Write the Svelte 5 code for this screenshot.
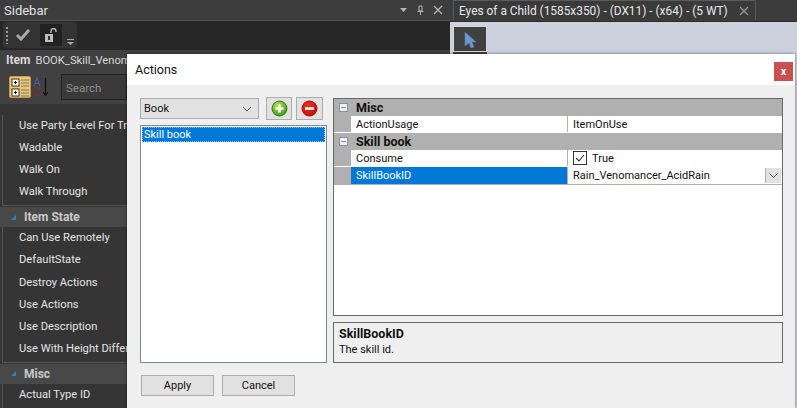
<script>
  const groups = [
    { title: '', rows: ['Use Party Level For Treasure', 'Wadable', 'Walk On', 'Walk Through'] },
    { title: 'Item State', rows: ['Can Use Remotely', 'DefaultState', 'Destroy Actions', 'Use Actions', 'Use Description', 'Use With Height Difference'] },
    { title: 'Misc', rows: ['Actual Type ID'] }
  ]
</script>

<div class="desktop">
  <aside class="sidebar">
    <div class="titlebar">
      <span class="title">Sidebar</span>
      <span class="title-icons">
        <svg width="9" height="9" viewBox="0 0 9 9"><path d="M1 2h7L4.500 6z" fill="#b5b5b5" /></svg>
        <svg width="9" height="11" viewBox="0 0 9 11"><path d="M3 1h3v5H3zM1.500 6.500h6M4.500 7v3" fill="none" stroke="#b5b5b5" /></svg>
        <svg width="10" height="10" viewBox="0 0 10 10"><path d="M1 1l8 8M9 1l-8 8" stroke="#b5b5b5" stroke-width="1.300" /></svg>
      </span>
    </div>
    <div class="toolstrip">
      <div class="tools">
        <span class="grip"></span>
        <svg class="check" width="16" height="14" viewBox="0 0 16 14"><path d="M2 7l4 4 8-9" fill="none" stroke="#a8a8a8" stroke-width="3" /></svg>
        <span class="lock">
          <svg width="14" height="15" viewBox="0 0 14 15"><path d="M1 6h8v8H1z" fill="#bdbdbd" /><path d="M4 8h2v4H4z" fill="#333" /><path d="M7 5V3a2 2 0 0 1 5 0v1" fill="none" stroke="#bdbdbd" stroke-width="1.300" /></svg>
        </span>
        <svg class="more" width="7" height="6" viewBox="0 0 7 6"><path d="M0 0h7v1H0zM0 3h7L3.500 6z" fill="#a8a8a8" /></svg>
      </div>
    </div>
    <div class="panel">
      <div class="item-row"><b>Item</b><span class="item-name">BOOK_Skill_Venomancer_AcidRain</span></div>
      <div class="search-row">
        <span class="cat-btn">
          <svg width="19" height="19" viewBox="0 0 19 19">
            <rect x="1" y="1" width="7" height="7" fill="#fff" stroke="#333" />
            <rect x="1" y="11" width="7" height="7" fill="#fff" stroke="#333" />
            <path d="M3 4.500h3M4.500 3v3M3 14.500h3M4.500 13v3" stroke="#111" />
            <path d="M10 2h8M10 5h8M10 8h8M10 12h8M10 15h8M10 18h8" stroke="#6a7a90" />
          </svg>
        </span>
        <svg class="az" width="17" height="20" viewBox="0 0 17 20">
          <path d="M12.500 1v17M10 15l2.500 3.500L15 15" fill="none" stroke="#111" stroke-width="1.200" />
          <path d="M1 9l3-8 3 8M2 6.500h4" fill="none" stroke="#3b5fa8" stroke-width="1.200" />
          <path d="M1.500 11h5l-5 7h5" fill="none" stroke="#8c2a2a" stroke-width="1.200" />
        </svg>
        <span class="search">Search</span>
      </div>
      <div class="grid-rows">
        {#each groups as group}
          {#if group.title}
            <div class="group-head"><i class="tri"></i><b>{group.title}</b></div>
          {/if}
          <div class="group-body">
            {#each group.rows as row}
              <div class="row">{row}</div>
            {/each}
          </div>
        {/each}
      </div>
    </div>
  </aside>

  <section class="document">
    <div class="tabstrip">
      <div class="tab">
        <span>Eyes of a Child (1585x350) - (DX11) - (x64) - (5 WT)</span>
        <svg width="10" height="10" viewBox="0 0 10 10"><path d="M1 1l8 8M9 1l-8 8" stroke="#999" stroke-width="1.200" /></svg>
      </div>
    </div>
    <div class="canvas">
      <span class="cursor-btn">
        <svg width="13" height="17" viewBox="0 0 13 17"><path d="M1 1l11 10H8l2 5-3 1-2-5-4 3z" fill="#6f97c9" stroke="#557ba8" stroke-width=".6" /></svg>
      </span>
    </div>
  </section>

  <div class="dialog">
    <header class="dialog-head">
      <span>Actions</span>
      <button class="close">x</button>
    </header>
    <div class="dialog-body">
      <div class="left">
        <div class="picker">
          <div class="select">
            <span>Book</span>
            <svg width="10" height="6" viewBox="0 0 10 6"><path d="M1 1l4 4 4-4" fill="none" stroke="#555" /></svg>
          </div>
          <span class="round-btn">
            <svg width="17" height="17" viewBox="0 0 17 17">
              <defs>
                <radialGradient id="green" cx=".4" cy=".3" r=".8"><stop offset="0" stop-color="#b6e24a" /><stop offset="1" stop-color="#2f9414" /></radialGradient>
                <radialGradient id="red" cx=".4" cy=".3" r=".8"><stop offset="0" stop-color="#f0301c" /><stop offset="1" stop-color="#c40c02" /></radialGradient>
              </defs>
              <circle cx="8.500" cy="8.500" r="7.500" fill="url(#green)" stroke="#2d7a10" /><path d="M8.500 4.500v8M4.500 8.500h8" stroke="#fff" stroke-width="2.600" />
            </svg>
          </span>
          <span class="round-btn">
            <svg width="17" height="17" viewBox="0 0 17 17"><circle cx="8.500" cy="8.500" r="7.500" fill="url(#red)" stroke="#a00d04" /><path d="M4 8.500h9" stroke="#fff" stroke-width="2.600" /></svg>
          </span>
        </div>
        <div class="listbox">
          <div class="list-item">Skill book</div>
        </div>
      </div>

      <div class="right">
        <div class="propgrid">
          <div class="cat"><span class="minus"></span><b>Misc</b></div>
          <div class="prop"><span class="name">ActionUsage</span><span class="val">ItemOnUse</span></div>
          <div class="cat"><span class="minus"></span><b>Skill book</b></div>
          <div class="prop"><span class="name">Consume</span><span class="val">
            <svg width="14" height="14" viewBox="0 0 14 14"><rect x=".5" y=".5" width="13" height="13" fill="#fff" stroke="#333" /><path d="M3 7l3 3 5-6" fill="none" stroke="#333" stroke-width="1.100" /></svg>
            True</span></div>
          <div class="prop active"><span class="name">SkillBookID</span><span class="val">Rain_Venomancer_AcidRain<i class="drop"><svg width="9" height="5" viewBox="0 0 9 5"><path d="M.5.5l4 4 4-4" fill="none" stroke="#555" /></svg></i></span></div>
        </div>
        <div class="help">
          <b>SkillBookID</b>
          <span>The skill id.</span>
        </div>
      </div>

      <div class="actions">
        <button>Apply</button>
        <button>Cancel</button>
      </div>
    </div>
  </div>
</div>

<style>
  :global(body) {
    margin: 0;
    background: #2f2f2f;
  }

  .desktop {
    position: relative;
    display: flex;
    width: 797px;
    height: 408px;
    overflow: hidden;
    font-family: Roboto, "Open Sans", sans-serif;
    font-size: 11px;
    color: #111;
  }

  /* sidebar */
  .sidebar {
    width: 450px;
    flex: none;
    display: flex;
    flex-direction: column;
    background: #353535;
    color: #e2e2e2;
  }

  .titlebar {
    height: 20px;
    flex: none;
    padding: 0 7px 0 4px;
    display: flex;
    align-items: center;
    justify-content: space-between;
    background: #3d3d3d;
    border-bottom: 1px solid #555;
    font-size: 13px;
  }

  .title-icons {
    display: flex;
    align-items: center;
    gap: 8px;
  }

  .toolstrip {
    height: 28px;
    flex: none;
    background: #262626;
    padding-top: 1px;
  }

  .tools {
    width: 74px;
    height: 26px;
    margin-left: 3px;
    padding-left: 3px;
    display: flex;
    align-items: center;
    background: #333;
    border-radius: 3px;
    box-sizing: border-box;
  }

  .grip {
    width: 2px;
    height: 17px;
    margin-right: 7px;
    background: repeating-linear-gradient(#999 0 2px, transparent 2px 4px);
  }

  .lock {
    width: 22px;
    height: 22px;
    margin-left: 9px;
    display: flex;
    align-items: center;
    justify-content: center;
    background: #222;
  }

  .more {
    margin: 14px 0 0 5px;
  }

  .panel {
    flex: 1;
    min-height: 0;
    display: flex;
    flex-direction: column;
    background: #414141;
  }

  /* the dialog covers everything past x=127, so these stop there */
  .item-row {
    width: 121px;
    height: 20px;
    flex: none;
    padding-left: 6px;
    display: flex;
    align-items: center;
    gap: 5px;
    overflow: hidden;
    white-space: nowrap;
    color: #d8d8d8;
    font-size: 11.200px;
  }

  .item-row b {
    font-size: 12px;
  }

  .item-name {
    min-width: 0;
    overflow: hidden;
  }

  .search-row {
    height: 34px;
    flex: none;
    padding-left: 9px;
    display: flex;
    align-items: center;
    gap: 2px;
  }

  .cat-btn {
    width: 20px;
    height: 20px;
    display: flex;
    align-items: center;
    justify-content: center;
    background: #f4c56a;
    border: 1px solid #c9994a;
    border-radius: 2px;
  }

  .search {
    width: 60px;
    height: 24px;
    line-height: 26px;
    margin-left: 9px;
    padding-left: 4px;
    flex: none;
    background: #3a3a3a;
    border: 1px solid #222;
    color: #8e8e8e;
    font-size: 11.500px;
  }

  .grid-rows {
    flex: none;
    background: #353535;
    padding-top: 11px;
  }

  .group-head {
    height: 20px;
    padding-left: 11px;
    display: flex;
    align-items: center;
    gap: 8px;
    background: #484848;
    color: #c9c9c9;
    font-size: 12px;
  }

  .tri {
    width: 0;
    height: 0;
    border-left: 5px solid transparent;
    border-bottom: 5px solid #2e7fc0;
  }

  .group-body {
    margin: 0 0 1px 2px;
    padding-bottom: 2px;
    border-left: 1px solid #555;
    border-bottom: 1px solid #555;
  }

  .row {
    width: 108px;
    height: 22.100px;
    line-height: 22px;
    padding-left: 16px;
    overflow: hidden;
    white-space: nowrap;
    color: #e4e4e4;
    font-size: 11.200px;
  }

  /* document */
  .document {
    flex: 1;
    display: flex;
    flex-direction: column;
  }

  .tabstrip {
    height: 21px;
    padding-left: 3px;
    background: #3c3c3c;
    border-bottom: 1px solid #2a2a2a;
  }

  .tab {
    width: 303px;
    height: 20px;
    padding: 0 6px 0 5px;
    display: flex;
    align-items: center;
    justify-content: space-between;
    box-sizing: border-box;
    background: #3a3a3a;
    border: 1px solid #5a5a5a;
    border-bottom: none;
    color: #e8e8e8;
    white-space: nowrap;
    font-size: 11.900px;
  }

  .canvas {
    flex: 1;
    padding: 4px 0 0 3px;
    background: #cdd1de;
  }

  .cursor-btn {
    width: 32px;
    height: 24px;
    display: flex;
    align-items: center;
    justify-content: center;
    background: #404040;
    border: 1px solid #d8d8d8;
    box-shadow: 0 2px 0 #404040;
  }

  /* dialog floats over everything */
  .dialog {
    position: absolute;
    left: 127px;
    top: 54px;
    width: 668px;
    height: 354px;
    display: flex;
    flex-direction: column;
    background: #efefef;
    box-shadow: 0 0 3px rgba(0, 0, 0, .5);
  }

  .dialog-head {
    height: 31px;
    padding: 0 2px 0 8px;
    display: flex;
    align-items: center;
    justify-content: space-between;
    background: #fff;
    font-size: 12.500px;
  }

  .close {
    width: 19px;
    height: 19px;
    padding: 0;
    margin-top: 3px;
    border: none;
    background: #c75050;
    color: #fff;
    font: bold 10px Roboto, sans-serif;
  }

  .dialog-body {
    flex: 1;
    display: grid;
    grid-template-columns: 187px 450px;
    grid-template-rows: 266px auto;
    column-gap: 6px;
    padding: 12px 0 0 13px;
  }

  .left {
    display: flex;
    flex-direction: column;
    gap: 5px;
  }

  .picker {
    display: flex;
    align-items: center;
    height: 23px;
  }

  .select {
    width: 121px;
    height: 21px;
    padding: 0 6px 0 3px;
    display: flex;
    align-items: center;
    justify-content: space-between;
    box-sizing: border-box;
    background: #e1e1e1;
    border: 1px solid #adadad;
    margin-right: 7px;
  }

  .round-btn {
    width: 27px;
    height: 23px;
    margin-right: 4px;
    display: flex;
    align-items: center;
    justify-content: center;
    box-sizing: border-box;
    background: #e1e1e1;
    border: 1px solid #adadad;
  }

  .listbox {
    flex: 1;
    padding: 1px;
    background: #fff;
    border: 1px solid #828790;
  }

  .list-item {
    height: 13px;
    line-height: 13px;
    padding-left: 1px;
    background: #0078d7;
    color: #fff;
    border: 1px dotted #8cc0ec;
  }

  .right {
    display: flex;
    flex-direction: column;
    gap: 6px;
    padding-top: 1px;
  }

  .propgrid {
    height: 218px;
    flex: none;
    box-sizing: border-box;
    background: #fff;
    border: 1px solid #696969;
  }

  .cat {
    height: 17px;
    padding-left: 5px;
    display: flex;
    align-items: center;
    gap: 8px;
    background: #b0b0b0;
    font-size: 12.500px;
  }

  .minus {
    width: 7px;
    height: 7px;
    border: 1px solid #8a8f9c;
    background: linear-gradient(#8a90b0, #8a90b0) center / 5px 1px no-repeat, #eee;
  }

  .prop {
    height: 16px;
    margin-bottom: 1px;
    display: flex;
    background: #b0b0b0;
    border-left: 17px solid #b0b0b0;
  }

  .prop.active {
    margin-bottom: 0;
    height: 17px;
    border-bottom: 1px solid #b0b0b0;
  }

  .name {
    width: 211px;
    padding-left: 5px;
    margin-right: 1px;
    line-height: 17px;
    background: #fff;
  }

  .val {
    flex: 1;
    padding-left: 5px;
    display: flex;
    align-items: center;
    gap: 5px;
    line-height: 17px;
    background: #fff;
    position: relative;
  }

  .active .name {
    background: #0078d7;
    color: #fff;
  }

  .drop {
    position: absolute;
    right: 1px;
    top: 1px;
    width: 15px;
    height: 15px;
    display: flex;
    align-items: center;
    justify-content: center;
    background: #e1e1e1;
    border-left: 1px solid #b0b0b0;
  }

  .help {
    height: 41px;
    padding: 3px 5px;
    display: flex;
    flex-direction: column;
    box-sizing: border-box;
    border: 1px solid #696969;
    line-height: 16px;
  }

  .help b {
    font-size: 12.500px;
  }

  .actions {
    grid-column: 1 / 3;
    display: flex;
    gap: 8px;
    padding: 12px 0 0 1px;
  }

  .actions button {
    width: 73px;
    height: 21px;
    padding: 0;
    background: #e1e1e1;
    border: 1px solid #adadad;
    font: inherit;
    color: #111;
  }
</style>
